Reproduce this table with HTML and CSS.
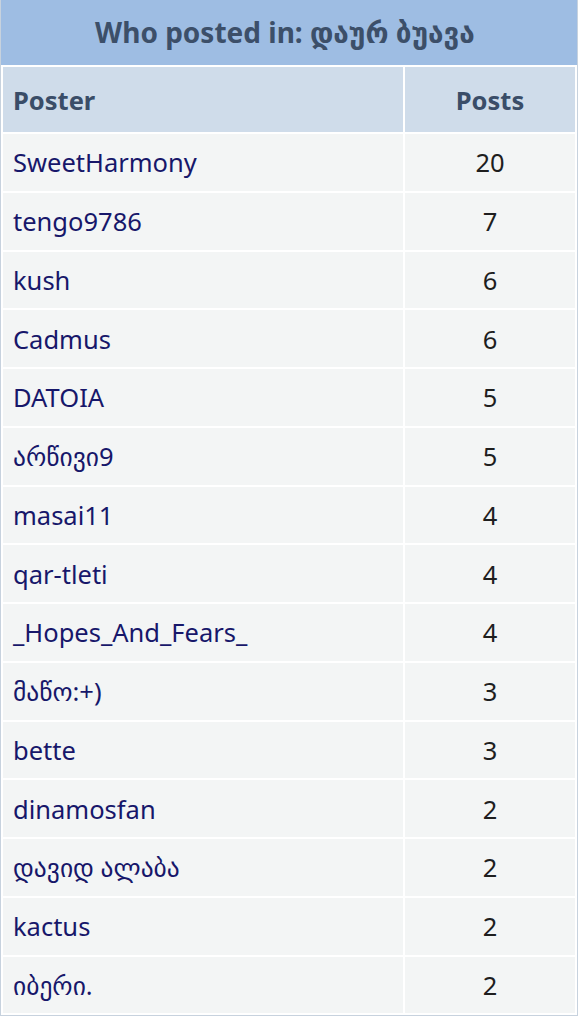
FILE: index.html
```html
<!DOCTYPE html>
<html>
<head>
<meta charset="utf-8">
<link rel="stylesheet" href="styles.css">
</head>
<body>
<div class="box">
  <div class="title">Who posted in: დაურ ბუავა</div>
  <table class="posters">
    <thead>
      <tr><th class="c-name">Poster</th><th class="c-num">Posts</th></tr>
    </thead>
    <tbody>
      <tr><td class="c-name"><a>SweetHarmony</a></td><td class="c-num">20</td></tr>
      <tr><td class="c-name"><a>tengo9786</a></td><td class="c-num">7</td></tr>
      <tr><td class="c-name"><a>kush</a></td><td class="c-num">6</td></tr>
      <tr><td class="c-name"><a>Cadmus</a></td><td class="c-num">6</td></tr>
      <tr><td class="c-name"><a>DATOIA</a></td><td class="c-num">5</td></tr>
      <tr><td class="c-name"><a>არწივი9</a></td><td class="c-num">5</td></tr>
      <tr><td class="c-name"><a>masai11</a></td><td class="c-num">4</td></tr>
      <tr><td class="c-name"><a>qar-tleti</a></td><td class="c-num">4</td></tr>
      <tr><td class="c-name"><a>_Hopes_And_Fears_</a></td><td class="c-num">4</td></tr>
      <tr><td class="c-name"><a>მაწო:+)</a></td><td class="c-num">3</td></tr>
      <tr><td class="c-name"><a>bette</a></td><td class="c-num">3</td></tr>
      <tr><td class="c-name"><a>dinamosfan</a></td><td class="c-num">2</td></tr>
      <tr><td class="c-name"><a>დავიდ ალაბა</a></td><td class="c-num">2</td></tr>
      <tr><td class="c-name"><a>kactus</a></td><td class="c-num">2</td></tr>
      <tr><td class="c-name"><a>იბერი.</a></td><td class="c-num">2</td></tr>
    </tbody>
  </table>
</div>
</body>
</html>
```
FILE: styles.css
```css
html, body {
  margin: 0;
  padding: 0;
  background: #ffffff;
}
body {
  font-family: "Noto Sans", "DejaVu Sans", sans-serif;
}
.box {
  width: 578px;
  box-sizing: border-box;
  border: 1px solid #c7d2de;
  border-top: none;
  background: #ffffff;
}
.title {
  height: 65px;
  background: #9ebde3;
  color: #3c4f69;
  font-weight: 700;
  font-size: 28px;
  line-height: 1;
  display: flex;
  align-items: center;
  justify-content: center;
  padding: 0 8px 2px 0;
  box-sizing: border-box;
}
.posters {
  width: 576px;
  border-collapse: separate;
  border-spacing: 2px;
  background: #ffffff;
  table-layout: fixed;
}
.posters th {
  height: 65px;
  padding: 0;
  background: #cfdcea;
  color: #3a4d68;
  font-size: 25.5px;
  font-weight: 700;
}
.posters td {
  height: 56.75px;
  padding: 0;
  background: #f3f5f5;
  font-size: 25.5px;
}
.posters .c-name {
  width: 400px;
  text-align: left;
  padding-left: 10px;
  box-sizing: border-box;
}
.posters td.c-num {
  text-align: center;
  color: #1e1e1e;
}
.posters th.c-num {
  text-align: center;
}
.posters a {
  color: #17176a;
  text-decoration: none;
}
```
